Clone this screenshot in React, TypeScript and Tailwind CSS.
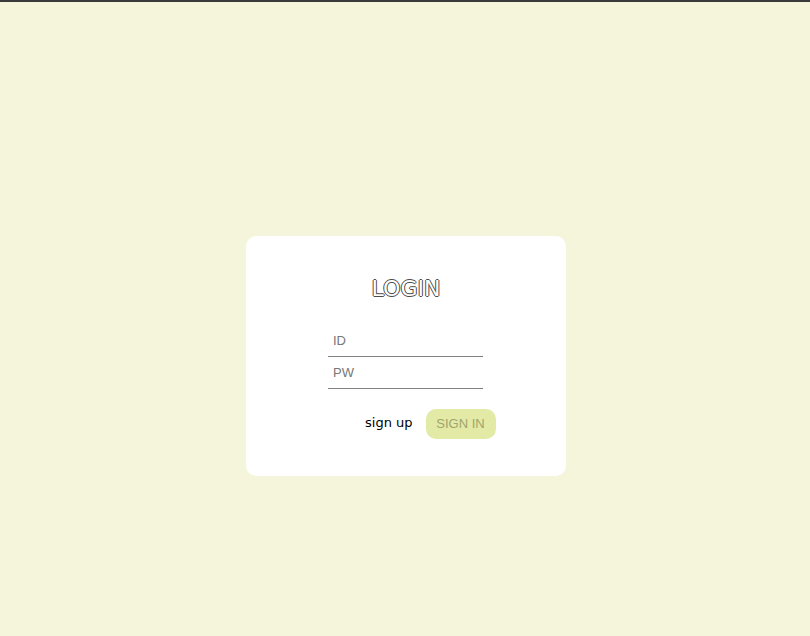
export default function App() {
  return (
    <main className="min-h-[636px] bg-[#f5f5dc] border-t-2 border-[#3a3a3a] flex justify-center pt-[234px] pl-[2px]">
      {/* Login card */}
      <section className="w-[320px] h-[240px] bg-white rounded-[10px] flex flex-col items-center pt-[40px]">
        <h2
          className="font-['DejaVu_Sans',sans-serif] text-[22px] leading-[26px] text-white"
          style={{ textShadow: '-1px 0 #4a4a4a, 1px 0 #4a4a4a, 0 -1px #4a4a4a, 0 1px #4a4a4a' }}
        >
          LOGIN
        </h2>

        <div className="w-[155px] mt-[26px] mr-[1px] flex flex-col font-['Liberation_Sans',sans-serif]">
          <input
            className="h-[29px] px-[5px] pb-[4px] text-[13px] text-[#333] placeholder-[#777] border-b border-[#808080] outline-none bg-transparent"
            placeholder="ID"
          />
          <input
            type="password"
            className="h-[29px] mt-[3px] px-[5px] pb-[4px] text-[13px] text-[#333] placeholder-[#777] border-b border-[#808080] outline-none bg-transparent"
            placeholder="PW"
          />

          <div className="flex items-center gap-[13px] pl-[37px] mt-[20px] whitespace-nowrap">
            <span
              className="font-['DejaVu_Sans',sans-serif] text-[13px] text-black pb-[2px]"
              style={{ textShadow: '0 0 1px #fff' }}
            >
              sign up
            </span>
            <button className="shrink-0 w-[70px] h-[30px] rounded-[10px] bg-[#e3eaa6] text-[#9fa56b] text-[13px] font-['Liberation_Sans',sans-serif]">
              SIGN IN
            </button>
          </div>
        </div>
      </section>
    </main>
  );
}
